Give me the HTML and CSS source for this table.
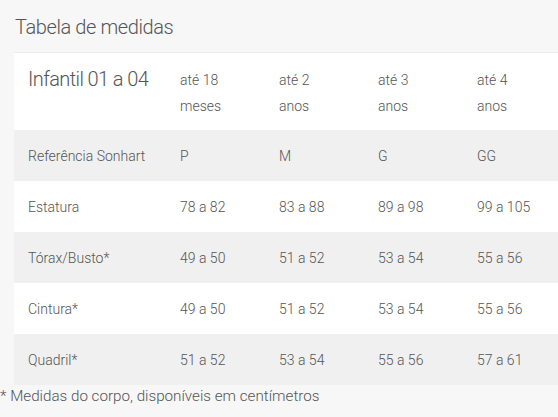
FILE: index.html
```html
<!DOCTYPE html>
<html lang="pt">
<head>
<meta charset="utf-8">
<link rel="stylesheet" href="styles.css">
</head>
<body>
<div class="page">
  <h2 class="title">Tabela de medidas</h2>
  <table class="sizes">
    <colgroup>
      <col class="c-first"><col class="c"><col class="c"><col class="c"><col class="c">
    </colgroup>
    <thead>
      <tr class="head">
        <th class="name">Infantil 01 a 04</th>
        <th>até 18<br>meses</th>
        <th>até 2<br>anos</th>
        <th>até 3<br>anos</th>
        <th>até 4<br>anos</th>
      </tr>
    </thead>
    <tbody>
      <tr class="alt"><td>Referência Sonhart</td><td>P</td><td>M</td><td>G</td><td>GG</td></tr>
      <tr><td>Estatura</td><td>78 a 82</td><td>83 a 88</td><td>89 a 98</td><td>99 a 105</td></tr>
      <tr class="alt"><td>Tórax/Busto*</td><td>49 a 50</td><td>51 a 52</td><td>53 a 54</td><td>55 a 56</td></tr>
      <tr><td>Cintura*</td><td>49 a 50</td><td>51 a 52</td><td>53 a 54</td><td>55 a 56</td></tr>
      <tr class="alt"><td>Quadril*</td><td>51 a 52</td><td>53 a 54</td><td>55 a 56</td><td>57 a 61</td></tr>
    </tbody>
  </table>
  <p class="note">* Medidas do corpo, disponíveis em centímetros</p>
</div>
</body>
</html>
```
FILE: styles.css
```css
html, body {
  margin: 0;
  padding: 0;
  background: #f7f7f7;
  overflow: hidden;
}
body {
  font-family: Roboto, "Open Sans", sans-serif;
  font-weight: 300;
  color: #555;
}
.page {
  width: 572px;
}
.title {
  margin: 0;
  padding: 15px 0 0 15px;
  height: 52px;
  box-sizing: border-box;
  font-size: 20px;
  font-weight: 300;
  letter-spacing: -0.4px;
  line-height: 24px;
  color: #555;
}
.sizes {
  margin-left: 14px;
  width: 548px;
  table-layout: fixed;
  border-collapse: collapse;
  border-top: 1px solid #ebebeb;
  font-size: 14px;
}
.c-first { width: 152px; }
.c { width: 99px; }
.sizes th, .sizes td {
  text-align: left;
  font-weight: 300;
  padding: 0 14px;
  white-space: nowrap;
}
.head {
  background: #fff;
}
.head th {
  height: 77px;
  box-sizing: border-box;
  padding-top: 14px;
  padding-bottom: 11px;
  vertical-align: top;
  line-height: 26px;
}
.head th.name {
  font-size: 20px;
  letter-spacing: -0.6px;
  line-height: 26px;
  padding-top: 13px;
}
.sizes tbody tr {
  background: #fff;
}
.sizes tbody tr.alt {
  background: #f0f0f0;
}
.sizes tbody td {
  height: 51px;
  box-sizing: border-box;
  vertical-align: middle;
}
.note {
  margin: 0;
  padding-top: 1px;
  font-size: 15.2px;
  line-height: 20px;
  color: #555;
}
```
